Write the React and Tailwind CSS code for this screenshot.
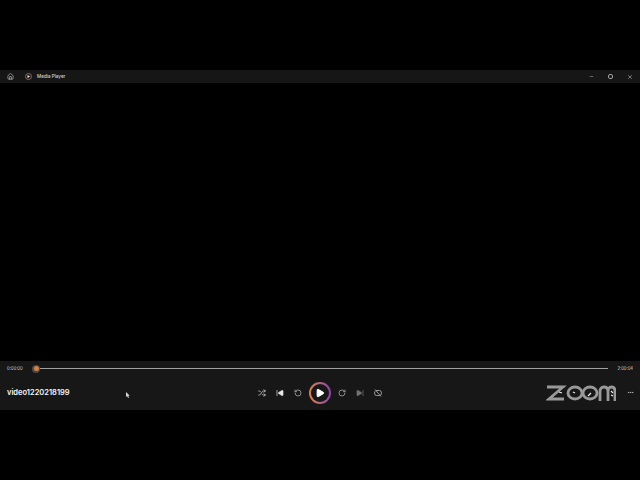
import { Home, Shuffle, SkipBack, SkipForward, RotateCcw, RotateCw, Play, Minus, X, Ellipsis } from 'lucide-react';

const ZoomLogo = () => (
  <svg width="70" height="16" viewBox="0 0 70 16" fill="none" stroke="#999999" strokeWidth="2.8">
    <path d="M1 2 H17 L3 14 H18" />
    <ellipse cx="29" cy="8" rx="7" ry="6" />
    <ellipse cx="44" cy="8" rx="7" ry="6" />
    <path d="M54 16 V6.500 Q54 2 58 2 Q62 2 62 6.500 V16 M62 6.500 Q62 2 65.500 2 Q69 2 69 6.500 V16" />
    {/* Icones des controles vues a travers le filigrane */}
    <path d="M13 7 l3 1 M27 7 l2 1 M42 11 l3 -3 M65 6 l2 2 M65 10 l2 1" stroke="#ededed" strokeWidth="1.200" />
  </svg>
);

// Repetition desactivee : boucle barree
const RepeatOff = () => (
  <svg width="8" height="8" viewBox="0 0 8 8" fill="none" stroke="#a3a3a3" strokeWidth="0.9">
    <path d="M2 1.500 H5.500 Q7.500 1.500 7.500 4 Q7.500 6.500 5.500 6.500 H2.500 Q0.500 6.500 0.500 4 Q0.500 2.500 2 1.500" />
    <path d="M1 0.500 L7 7.500" />
  </svg>
);

const App = () => {
  return (
    <div className="relative w-[640px] h-[480px] bg-black flex flex-col pt-[70px] pb-[70px] overflow-hidden font-['Inter',sans-serif] text-white">
      {/* Barre de titre */}
      <div className="h-[13px] bg-[#161616] flex items-center shrink-0">
        <Home size={7} className="ml-[7px] text-neutral-300" />
        <div className="ml-[11px] w-[7px] h-[7px] rounded-full border border-[#8a6a60] flex items-center justify-center">
          <Play size={3} className="text-white fill-white" />
        </div>
        <span className="ml-[5px] mt-[1px] text-[4.600px] leading-none text-neutral-300 font-medium">Media Player</span>
        <div className="ml-auto flex items-center mr-[7px] gap-[14px] text-neutral-300">
          <Minus size={5} />
          <div className="w-[5px] h-[5px] border border-neutral-400 rounded-[2px]" />
          <X size={6} />
        </div>
      </div>

      {/* Zone video */}
      <div className="flex-1 bg-black" />

      {/* Controles */}
      <div className="h-[49px] bg-[#171717] flex flex-col shrink-0">
        <div className="h-[14px] flex items-center pt-[1px]">
          <span className="ml-[7px] mt-[1px] w-[25px] text-[4.200px] leading-none text-neutral-300">0:00:00</span>
          <div className="w-[8px] h-[8px] shrink-0 rounded-full bg-[#4a4a4a] flex items-center justify-center">
            <div className="w-[5px] h-[5px] rounded-full bg-[#d97f3f]" />
          </div>
          <div className="w-[568px] h-[1px] bg-neutral-400" />
          <span className="ml-auto mr-[7px] mt-[1px] text-[4.200px] leading-none text-neutral-300">2:00:04</span>
        </div>
        <div className="flex-1 flex items-center">
          <div className="flex-1 min-w-0 flex">
            <span className="ml-[7px] text-[7.500px] leading-none font-semibold text-neutral-100">video1220218199</span>
          </div>
          <div className="flex items-center gap-[10px] text-neutral-200">
            <Shuffle size={8} />
            <SkipBack size={8} className="fill-neutral-200" />
            <RotateCcw size={8} className="text-neutral-400" strokeWidth={2.5} />
            <div className="mx-[-3px] w-[22px] h-[22px] rounded-full bg-gradient-to-r from-[#d97f3f] to-[#8b3fa8] p-[2px]">
              <div className="w-full h-full rounded-full bg-[#171717] flex items-center justify-center">
                <Play size={10} className="text-white fill-white" />
              </div>
            </div>
            <RotateCw size={8} className="text-neutral-400" strokeWidth={2.5} />
            <SkipForward size={8} className="text-neutral-500 fill-neutral-500" />
            <RepeatOff />
          </div>
          <div className="flex-1 min-w-0 flex items-center justify-end">
            <ZoomLogo />
            <Ellipsis size={7} className="ml-[11px] mr-[6px] text-neutral-300" />
          </div>
        </div>
      </div>
      {/* Curseur */}
      <svg className="absolute left-[126px] top-[392px]" width="4" height="6" viewBox="0 0 4 6">
        <path d="M0 0 L0 5 L1.200 4 L2 6 L3 5.500 L2.200 3.700 L3.800 3.700 Z" fill="#d4d4d4" />
      </svg>
    </div>
  );
};

export default App;
